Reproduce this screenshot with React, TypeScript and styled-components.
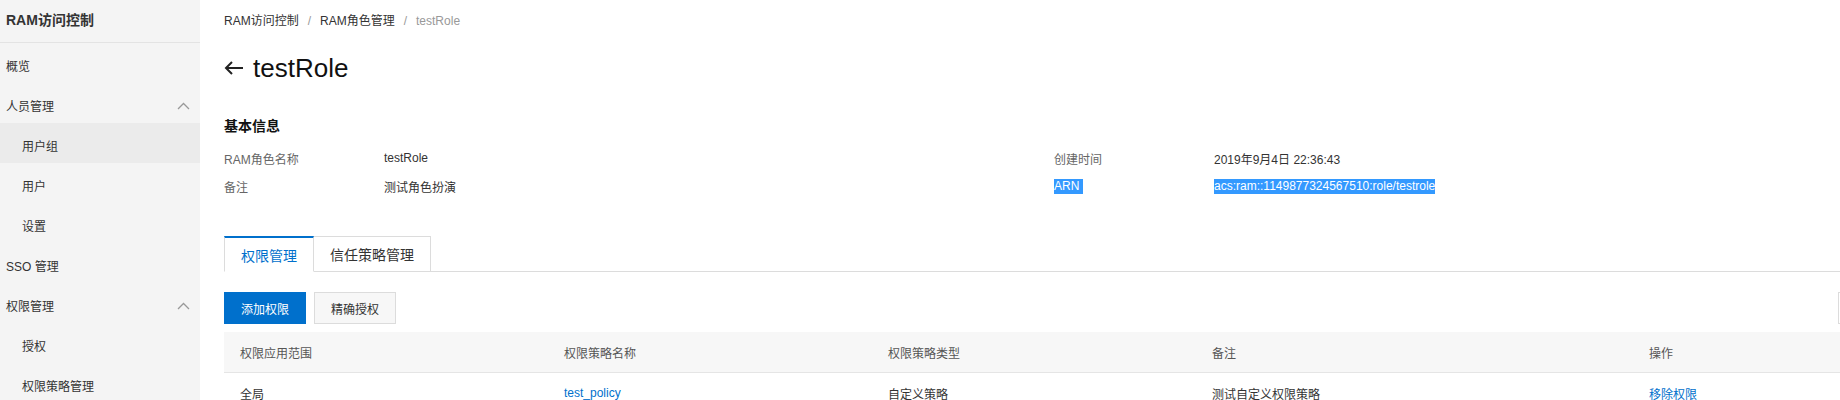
import React from "react";
import styled, { createGlobalStyle } from "styled-components";

const GlobalStyle = createGlobalStyle`
	html, body {
		margin: 0;
		padding: 0;
		background: #fff;
		overflow: hidden;
	}
	body {
		font-family: "Liberation Sans", "Noto Sans CJK SC", sans-serif;
		font-size: 12px;
		color: #333;
	}
`;

const Layout = styled.div`
	display: flex;
	width: 1840px;
	height: 400px;
	overflow: hidden;
`;

const Sidebar = styled.aside`
	flex: none;
	width: 200px;
	height: 100%;
	background: #f4f4f4;
`;

const SideTitle = styled.div`
	height: 43px;
	box-sizing: border-box;
	padding: 0 0 4px 6px;
	border-bottom: 1px solid #e3e3e3;
	display: flex;
	align-items: center;
	font-size: 14px;
	font-weight: bold;
	color: #333;
`;

const NavItem = styled.div<{ $sub?: boolean; $active?: boolean }>`
	height: 40px;
	box-sizing: border-box;
	display: flex;
	align-items: center;
	justify-content: space-between;
	padding: 5px 10px 0 ${(p) => (p.$sub ? 22 : 6)}px;
	background: ${(p) => (p.$active ? "#ebebeb" : "transparent")};
	color: #333;
`;

const Main = styled.main`
	flex: none;
	width: 1646px;
	padding-left: 24px;
`;

const Breadcrumb = styled.div`
	padding-top: 12px;
	line-height: 18px;
	display: flex;
`;

const Crumb = styled.span<{ $current?: boolean }>`
	color: ${(p) => (p.$current ? "#999" : "#333")};
`;

const Sep = styled.span`
	color: #999;
	margin: 0 9px;
`;

const PageTitle = styled.h1`
	margin: 22px 0 0;
	height: 32px;
	display: flex;
	align-items: center;
	gap: 9px;
	font-size: 26px;
	font-weight: normal;
	color: #111;
`;

const SectionTitle = styled.h2`
	margin: 32px 0 0;
	font-size: 14px;
	line-height: 20px;
	font-weight: bold;
	color: #111;
`;

const InfoGrid = styled.div`
	margin-top: 8px;
	display: grid;
	grid-template-columns: 160px 670px 160px 1fr;
	grid-auto-rows: 28px;
	align-items: center;
`;

const Label = styled.span`
	color: #666;
`;

const Value = styled.span`
	color: #333;
`;

const Selected = styled.span`
	background: #3399ff;
	color: #fff;
	justify-self: start;
	line-height: 15px;
`;

const TabBar = styled.div`
	margin-top: 36px;
	display: flex;
	border-bottom: 1px solid #dcdcdc;
	margin-right: -40px;
`;

const Tab = styled.div<{ $active?: boolean }>`
	height: 36px;
	box-sizing: border-box;
	margin-bottom: -1px;
	padding: 0 16px;
	display: flex;
	align-items: center;
	font-size: 14px;
	background: #fff;
	color: ${(p) => (p.$active ? "#0070cc" : "#333")};
	border: 1px solid #dcdcdc;
	border-top: ${(p) => (p.$active ? "2px solid #0070cc" : "1px solid #dcdcdc")};
	border-bottom-color: ${(p) => (p.$active ? "#fff" : "#dcdcdc")};
	& + & {
		border-left: none;
	}
`;

const Toolbar = styled.div`
	margin-top: 20px;
	display: flex;
	gap: 8px;
`;

const Button = styled.button<{ $primary?: boolean }>`
	height: 32px;
	padding: 0 16px;
	font-family: inherit;
	font-size: 12px;
	border: 1px solid ${(p) => (p.$primary ? "#0070cc" : "#dcdcdc")};
	background: ${(p) => (p.$primary ? "#0070cc" : "#f7f7f7")};
	color: ${(p) => (p.$primary ? "#fff" : "#333")};
	cursor: pointer;
`;

const IconButton = styled(Button)`
	margin-left: auto;
	width: 32px;
	padding: 0;
	background: #fff;
`;

const Table = styled.div`
	margin-top: 8px;
`;

const Row = styled.div<{ $head?: boolean }>`
	display: grid;
	grid-template-columns: 324px 324px 324px 437px 1fr;
	height: 40px;
	align-items: center;
	background: ${(p) => (p.$head ? "#f7f7f7" : "#fff")};
	border-bottom: 1px solid #e5e5e5;
	color: ${(p) => (p.$head ? "#555" : "#333")};
`;

const Cell = styled.div`
	padding: 0 16px;
	white-space: nowrap;
`;

const Link = styled.a`
	color: #0070cc;
	text-decoration: none;
`;

const ArrowLeft = () => (
	<svg width="20" height="14" viewBox="0 0 20 14" fill="none" stroke="#222" strokeWidth="2">
		<path d="M19 7H2" />
		<path d="M8 1L2 7l6 6" />
	</svg>
);

const ChevronUp = () => (
	<svg width="13" height="8" viewBox="0 0 13 8" fill="none" stroke="#999" strokeWidth="1.3">
		<path d="M1 7L6.5 1.5 12 7" />
	</svg>
);

const nav = [
	{ label: "概览" },
	{ label: "人员管理", group: true },
	{ label: "用户组", sub: true, active: true },
	{ label: "用户", sub: true },
	{ label: "设置", sub: true },
	{ label: "SSO 管理" },
	{ label: "权限管理", group: true },
	{ label: "授权", sub: true },
	{ label: "权限策略管理", sub: true },
];

export default function App() {
	return (
		<>
			<GlobalStyle />
			<Layout>
				<Sidebar>
					<SideTitle>RAM访问控制</SideTitle>
					{nav.map((item) => (
						<NavItem key={item.label} $sub={item.sub} $active={item.active}>
							<span>{item.label}</span>
							{item.group && <ChevronUp />}
						</NavItem>
					))}
				</Sidebar>
				<Main>
					<Breadcrumb>
						<Crumb>RAM访问控制</Crumb>
						<Sep>/</Sep>
						<Crumb>RAM角色管理</Crumb>
						<Sep>/</Sep>
						<Crumb $current>testRole</Crumb>
					</Breadcrumb>
					<PageTitle>
						<ArrowLeft />
						testRole
					</PageTitle>
					<SectionTitle>基本信息</SectionTitle>
					<InfoGrid>
						<Label>RAM角色名称</Label>
						<Value>testRole</Value>
						<Label>创建时间</Label>
						<Value>2019年9月4日 22:36:43</Value>
						<Label>备注</Label>
						<Value>测试角色扮演</Value>
						<Selected>ARN&nbsp;</Selected>
						<Selected>acs:ram::1149877324567510:role/testrole</Selected>
					</InfoGrid>
					<TabBar>
						<Tab $active>权限管理</Tab>
						<Tab>信任策略管理</Tab>
					</TabBar>
					<Toolbar>
						<Button $primary>添加权限</Button>
						<Button>精确授权</Button>
						<IconButton aria-label="刷新" />
					</Toolbar>
					<Table>
						<Row $head>
							<Cell>权限应用范围</Cell>
							<Cell>权限策略名称</Cell>
							<Cell>权限策略类型</Cell>
							<Cell>备注</Cell>
							<Cell>操作</Cell>
						</Row>
						<Row>
							<Cell>全局</Cell>
							<Cell>
								<Link href="#">test_policy</Link>
							</Cell>
							<Cell>自定义策略</Cell>
							<Cell>测试自定义权限策略</Cell>
							<Cell>
								<Link href="#">移除权限</Link>
							</Cell>
						</Row>
					</Table>
				</Main>
			</Layout>
		</>
	);
}
